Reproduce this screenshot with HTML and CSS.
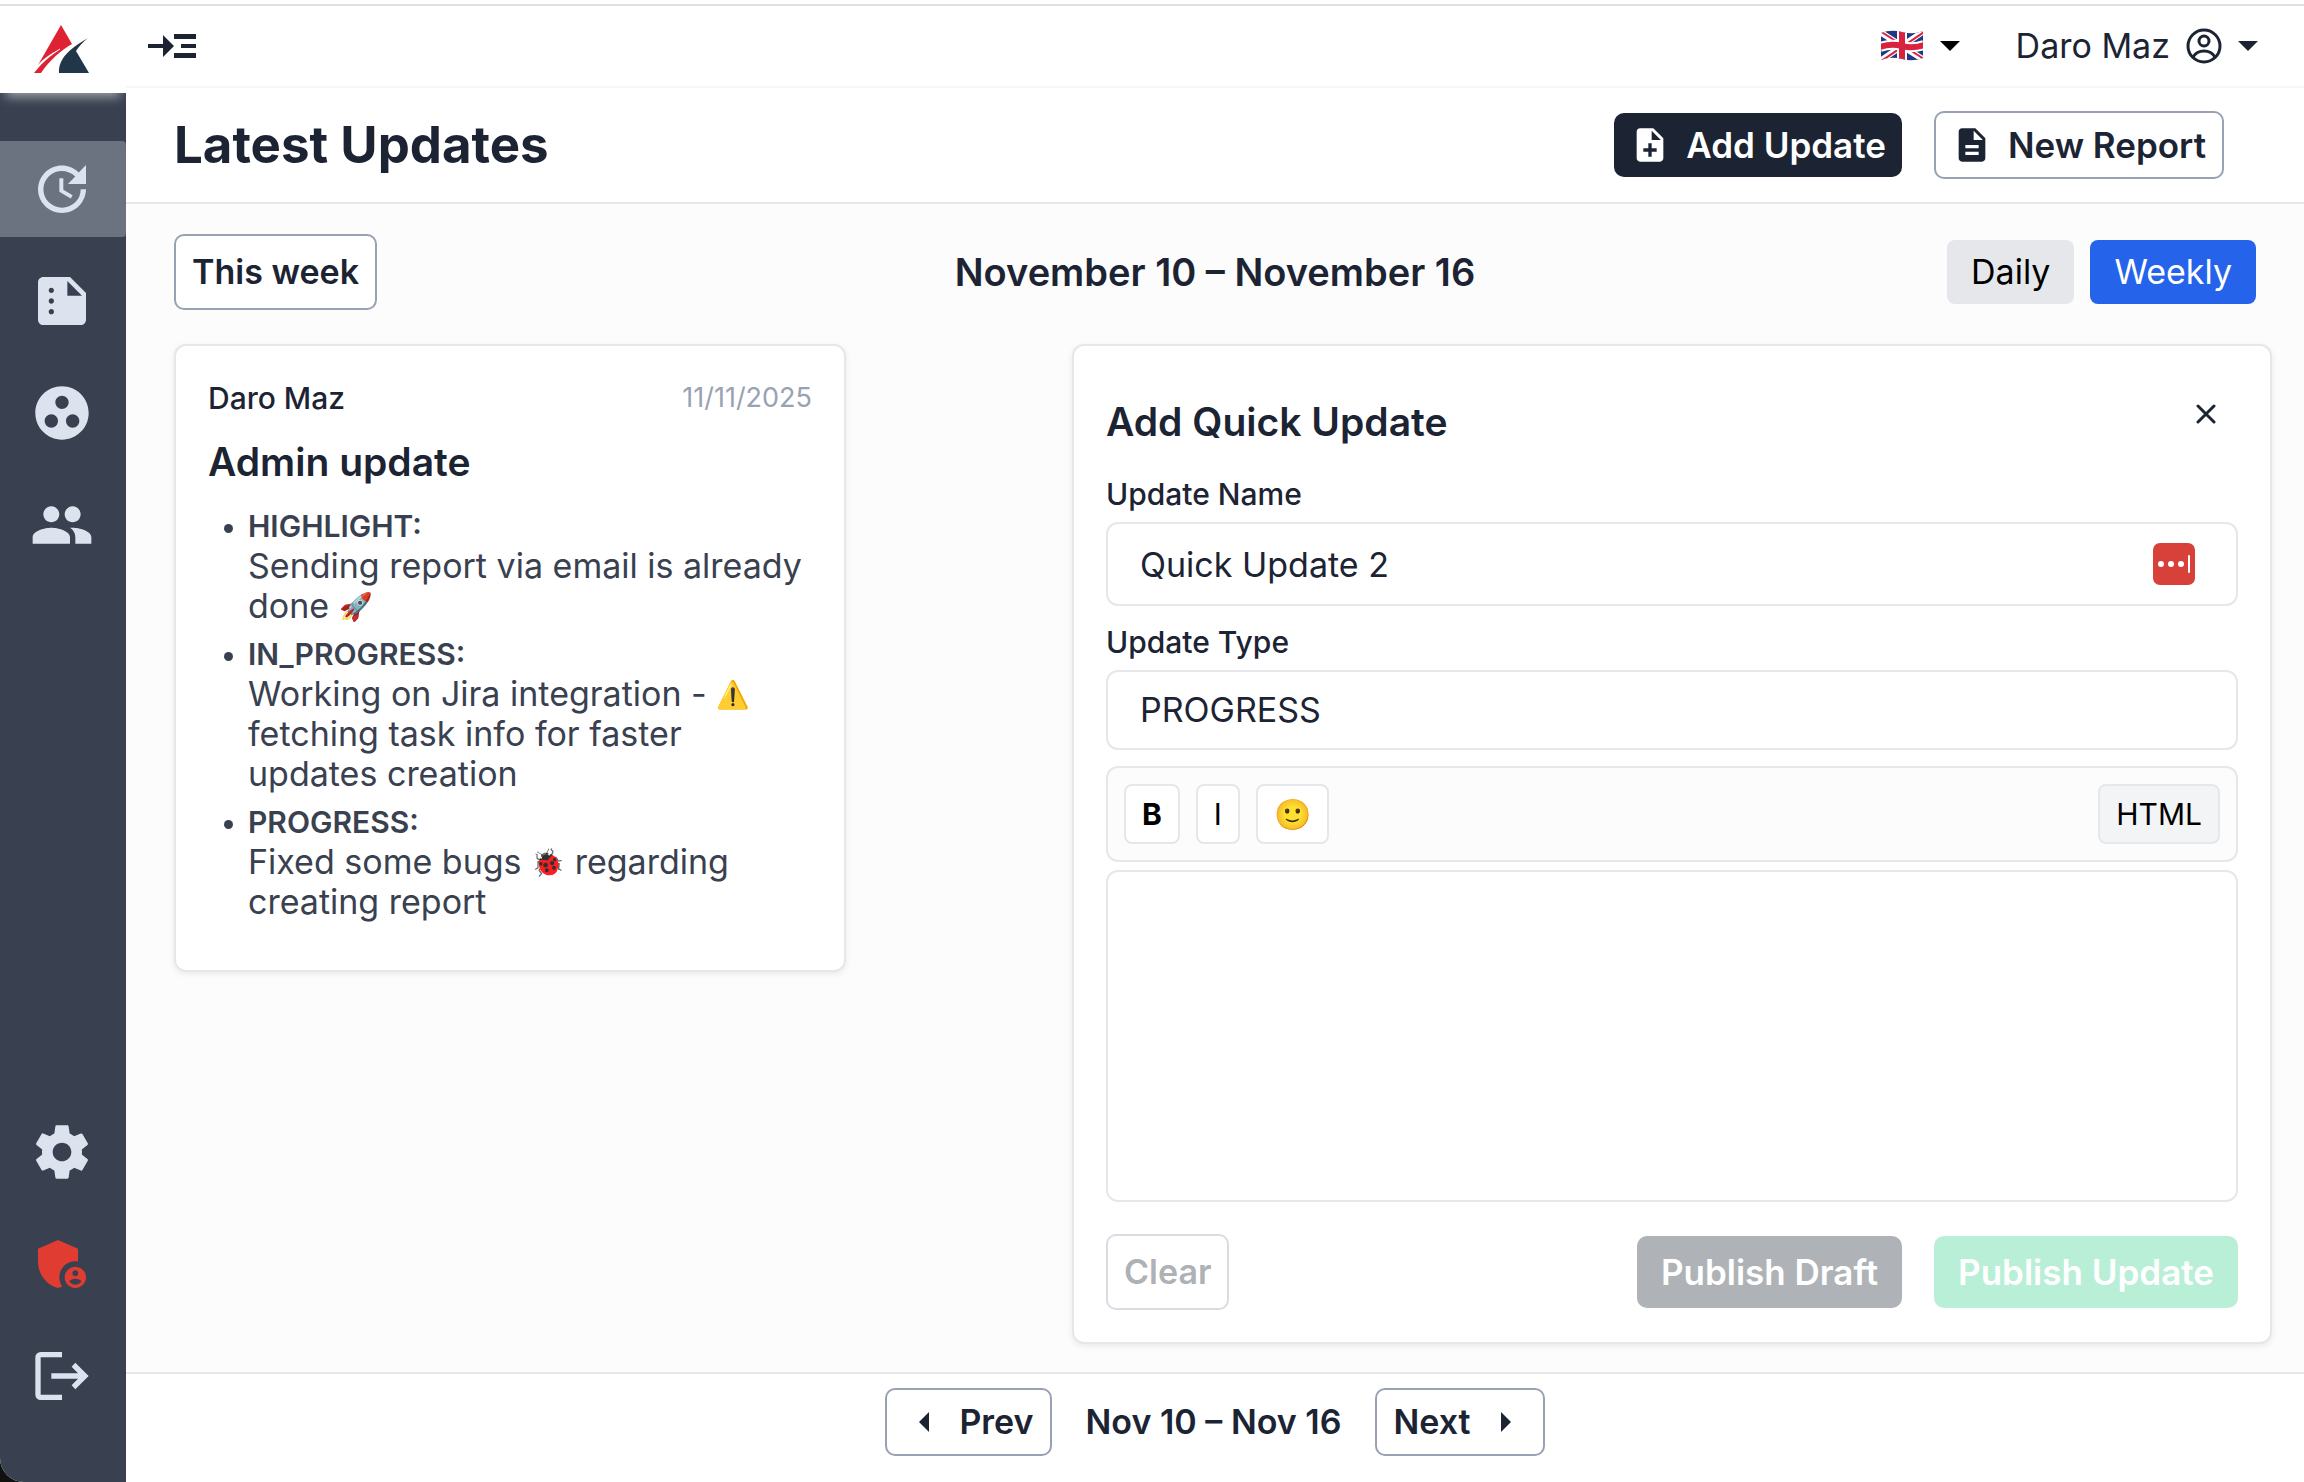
FILE: index.html
```
<!DOCTYPE html>
<html lang="en">
<head>
  <meta charset="UTF-8" />
  <meta name="viewport" content="width=device-width, initial-scale=1.0"/>
  <title>Latest Updates</title>
  <link rel="stylesheet" href="styles.css">
</head>
<body>
  <div class="app">
    <aside class="sidebar">
      <a class="logo" href="#" aria-label="Home">
        <svg width="56" height="48" viewBox="0 0 56 48">
          <path fill="#df2233" d="M27 0 38 19C27 25 15 36 7 48H0C7 39 17 30 25 25 17 28 9 34 4 40Z"/>
          <path fill="none" stroke="#fff" stroke-width="1" d="M4 41C11 34 18 29 26 24"/>
          <path fill="#22364a" d="M54 13C44 19 24 30 25 48H55L42 26C45 21 49 17 54 13Z"/>
        </svg>
      </a>
      <nav class="nav">
        <a class="nav-item active" href="#" aria-label="Updates">
          <svg viewBox="0 0 24 24"><path d="M21 10.12h-6.78l2.74-2.82c-2.73-2.7-7.15-2.8-9.88-.1-2.73 2.71-2.73 7.08 0 9.79s7.15 2.71 9.88 0C18.32 15.65 19 14.08 19 12.1h2c0 1.98-.88 4.55-2.64 6.29-3.51 3.48-9.21 3.48-12.72 0-3.5-3.47-3.53-9.11-.02-12.58s9.14-3.47 12.65 0L21 3v7.12zM12.5 8v4.25l3.5 2.08-.72 1.21L11 13V8h1.5z"/></svg>
        </a>
        <a class="nav-item" href="#" aria-label="Reports">
          <svg viewBox="0 0 24 24"><path d="M15 3H5c-1.1 0-1.99.9-1.99 2L3 19c0 1.1.89 2 1.99 2H19c1.1 0 2-.9 2-2V9l-6-6zM8 17c-.55 0-1-.45-1-1s.45-1 1-1 1 .45 1 1-.45 1-1 1zm0-4c-.55 0-1-.45-1-1s.45-1 1-1 1 .45 1 1-.45 1-1 1zm0-4c-.55 0-1-.45-1-1s.45-1 1-1 1 .45 1 1-.45 1-1 1zm6 1V4.5l5.5 5.5H14z"/></svg>
        </a>
        <a class="nav-item" href="#" aria-label="Teams">
          <svg viewBox="0 0 24 24"><path d="M12 2C6.48 2 2 6.48 2 12s4.48 10 10 10 10-4.48 10-10S17.52 2 12 2zM8 17.5c-1.38 0-2.5-1.12-2.5-2.5s1.12-2.5 2.5-2.5 2.5 1.12 2.5 2.5-1.12 2.5-2.5 2.5zM9.5 8c0-1.38 1.12-2.5 2.5-2.5s2.5 1.12 2.5 2.5-1.12 2.5-2.5 2.5S9.5 9.38 9.5 8zm6.5 9.5c-1.38 0-2.5-1.12-2.5-2.5s1.12-2.5 2.5-2.5 2.5 1.12 2.5 2.5-1.12 2.5-2.5 2.5z"/></svg>
        </a>
        <a class="nav-item" href="#" aria-label="Users">
          <svg viewBox="0 0 24 24"><path d="M16 11c1.66 0 2.99-1.34 2.99-3S17.66 5 16 5c-1.66 0-3 1.34-3 3s1.34 3 3 3zm-8 0c1.66 0 2.99-1.34 2.99-3S9.66 5 8 5C6.34 5 5 6.34 5 8s1.34 3 3 3zm0 2c-2.33 0-7 1.17-7 3.5V19h14v-2.5c0-2.33-4.67-3.5-7-3.5zm8 0c-.29 0-.62.02-.97.05 1.16.84 1.97 1.97 1.97 3.45V19h6v-2.5c0-2.33-4.67-3.5-7-3.5z"/></svg>
        </a>
      </nav>
      <nav class="nav nav-bottom">
        <a class="nav-item" href="#" aria-label="Settings">
          <svg viewBox="0 0 24 24"><path d="M19.43 12.98c.04-.32.07-.64.07-.98s-.03-.66-.07-.98l2.11-1.65c.19-.15.24-.42.12-.64l-2-3.46c-.12-.22-.39-.3-.61-.22l-2.49 1c-.52-.4-1.08-.73-1.69-.98l-.38-2.65C14.46 2.18 14.25 2 14 2h-4c-.25 0-.46.18-.49.42l-.38 2.65c-.61.25-1.17.59-1.69.98l-2.49-1c-.23-.09-.49 0-.61.22l-2 3.46c-.13.22-.07.49.12.64l2.11 1.65c-.04.32-.07.65-.07.98s.03.66.07.98l-2.11 1.65c-.19.15-.24.42-.12.64l2 3.46c.12.22.39.3.61.22l2.49-1c.52.4 1.08.73 1.69.98l.38 2.65c.03.24.24.42.49.42h4c.25 0 .46-.18.49-.42l.38-2.65c.61-.25 1.17-.59 1.69-.98l2.49 1c.23.09.49 0 .61-.22l2-3.46c.12-.22.07-.49-.12-.64l-2.11-1.65zM12 15.5c-1.93 0-3.5-1.57-3.5-3.5s1.57-3.5 3.5-3.5 3.5 1.57 3.5 3.5-1.57 3.5-3.5 3.5z"/></svg>
        </a>
        <a class="nav-item admin" href="#" aria-label="Admin panel">
          <svg viewBox="0 0 24 24"><path d="M17 11c.34 0 .67.04 1 .09V6.27L10.5 3 3 6.27v4.91c0 4.54 3.2 8.79 7.5 9.82.55-.13 1.08-.32 1.6-.55-.69-.98-1.1-2.17-1.1-3.45 0-3.31 2.69-6 6-6z"/><path d="M17 13c-2.21 0-4 1.79-4 4s1.79 4 4 4 4-1.79 4-4-1.79-4-4-4zm0 1.38c.62 0 1.12.51 1.12 1.12s-.51 1.12-1.12 1.12-1.12-.51-1.12-1.12.5-1.12 1.12-1.12zm0 5.37c-.93 0-1.74-.46-2.24-1.17.05-.72 1.51-1.08 2.24-1.08s2.19.36 2.24 1.08c-.5.71-1.31 1.17-2.24 1.17z"/></svg>
        </a>
        <a class="nav-item" href="#" aria-label="Log out">
          <svg viewBox="0 0 24 24"><path d="M12 5H4v14h8v2H4a2 2 0 0 1-2-2V5a2 2 0 0 1 2-2h8zM8 11h10l-2.4-2.5L17 7l5 5-5 5-1.4-1.5L18 13H8z"/></svg>
        </a>
      </nav>
    </aside>

    <div class="page">
      <header class="topbar">
        <button class="menu-toggle" aria-label="Open menu">
          <svg width="48" height="24" viewBox="0 0 48 24"><path d="M0 10h15V1l11 11-11 11v-9H0zM26 0h22v5H26zM33 10h15v4H33zM26 19h22v5H26z"/></svg>
        </button>
        <div class="topbar-right">
          <button class="lang" aria-label="Language">
            <svg width="44" height="32" viewBox="0 0 44 32" fill="none">
              <clipPath id="flag"><path d="M1 3Q11-1 22 2T43 1V28Q33 32 22 29T1 30Z"/></clipPath>
              <g clip-path="url(#flag)">
                <path fill="#1f3a85" d="M0 0h44v32H0z"/>
                <path stroke="#fff" stroke-width="6" d="M0 2 44 30M0 31 44 1"/>
                <path stroke="#d8233f" stroke-width="2" d="M0 1 44 29M0 32 44 2"/>
                <path stroke="#fff" stroke-width="10" d="M22 0v32M0 17Q11 13 22 16T44 15"/>
                <path stroke="#d8233f" stroke-width="6" d="M22 0v32M0 17Q11 13 22 16T44 15"/>
              </g>
            </svg>
            <svg width="20" height="10" viewBox="0 0 20 10"><path d="M0 0h20L10 10z"/></svg>
          </button>
          <button class="user">
            <span>Daro Maz</span>
            <svg width="36" height="36" viewBox="0 0 36 36" fill="none" stroke="#1c2434" stroke-width="3"><circle cx="18" cy="18" r="16"/><circle cx="18" cy="13" r="5"/><path d="M7 29c3-5 7-6 11-6s8 1 11 6"/></svg>
            <svg width="20" height="10" viewBox="0 0 20 10" fill="#1c2434"><path d="M0 0h20L10 10z"/></svg>
          </button>
        </div>
      </header>

      <div class="titlebar">
        <h1>Latest Updates</h1>
        <div class="titlebar-actions">
          <button class="btn btn-wide btn-dark">
            <svg width="40" height="40" viewBox="0 0 24 24" fill="#fff"><path d="M14 2H6c-1.1 0-1.99.9-1.99 2L4 20c0 1.1.89 2 1.99 2H18c1.1 0 2-.9 2-2V8l-6-6zm2 14h-3v3h-2v-3H8v-2h3v-3h2v3h3v2zm-3-7V3.5L18.5 9H13z"/></svg>
            Add Update
          </button>
          <button class="btn btn-wide btn-outline">
            <svg width="40" height="40" viewBox="0 0 24 24" fill="#1c2434"><path d="M14 2H6c-1.1 0-1.99.9-1.99 2L4 20c0 1.1.89 2 1.99 2H18c1.1 0 2-.9 2-2V8l-6-6zm2 16H8v-2h8v2zm0-4H8v-2h8v2zm-3-5V3.5L18.5 9H13z"/></svg>
            New Report
          </button>
        </div>
      </div>

      <main class="content">
        <div class="filters">
          <button class="btn btn-outline this-week">This week</button>
          <h2 class="range">November 10 – November 16</h2>
          <div class="view-switch">
            <button class="view">Daily</button>
            <button class="view selected">Weekly</button>
          </div>
        </div>

        <div class="columns">
          <article class="card">
            <div class="card-head">
              <span class="author">Daro Maz</span>
              <time class="date" datetime="2025-11-11">11/11/2025</time>
            </div>
            <h3 class="card-title">Admin update</h3>
            <ul class="updates">
              <li><strong>HIGHLIGHT:</strong>Sending report via email is already<br>done <span class="emoji">🚀</span></li>
              <li><strong>IN_PROGRESS:</strong>Working on Jira integration - <span class="emoji">⚠️</span><br>fetching task info for faster<br>updates creation</li>
              <li><strong>PROGRESS:</strong>Fixed some bugs <span class="emoji">🐞</span> regarding<br>creating report</li>
            </ul>
          </article>

          <form class="card form">
            <div class="form-head">
              <h3>Add Quick Update</h3>
              <button type="button" class="close" aria-label="Close">
                <svg width="20" height="20" viewBox="0 0 20 20" stroke="#1c2434" stroke-width="3" stroke-linecap="round"><path d="M2 2l16 16M18 2 2 18"/></svg>
              </button>
            </div>

            <label for="name">Update Name</label>
            <div class="name-field">
              <input type="text" id="name" value="Quick Update 2">
              <svg class="fill-icon" width="42" height="42" viewBox="0 0 42 42">
                <rect width="42" height="42" rx="7" fill="#d8403a"/>
                <g fill="#fff"><circle cx="8" cy="21" r="3"/><circle cx="18" cy="21" r="3"/><circle cx="28" cy="21" r="3"/><rect x="35" y="12" width="2" height="18" rx="1"/></g>
              </svg>
            </div>

            <label for="type">Update Type</label>
            <select id="type">
              <option>PROGRESS</option>
              <option>HIGHLIGHT</option>
              <option>IN_PROGRESS</option>
            </select>

            <div class="editor-tools">
              <button type="button" class="tool bold">B</button>
              <button type="button" class="tool">I</button>
              <button type="button" class="tool">🙂</button>
              <button type="button" class="tool html">HTML</button>
            </div>
            <textarea aria-label="Update text"></textarea>

            <div class="form-actions">
              <button type="button" class="btn btn-outline clear" disabled>Clear</button>
              <button type="button" class="btn btn-wide publish draft" disabled>Publish Draft</button>
              <button type="button" class="btn btn-wide publish" disabled>Publish Update</button>
            </div>
          </form>
        </div>
      </main>

      <footer class="pager">
        <button class="btn btn-outline">
          <svg width="40" height="20" viewBox="0 0 40 20" fill="#1c2434"><path d="M26 0v20L16 10z"/></svg>
          Prev
        </button>
        <span class="pager-range">Nov 10 – Nov 16</span>
        <button class="btn btn-outline">
          Next
          <svg width="40" height="20" viewBox="0 0 40 20" fill="#1c2434"><path d="M14 0v20l10-10z"/></svg>
        </button>
      </footer>
    </div>
  </div>
</body>
</html>
```
FILE: styles.css
```
* {
  box-sizing: border-box;
}

body {
  margin: 0;
  background: #111;
  color: #1c2434;
  font-family: Inter, "Noto Sans", sans-serif;
  font-size: 34px;
  line-height: 40px;
}

h1, h2, h3, ul {
  margin: 0;
}

button, input, select, textarea {
  font: inherit;
  color: inherit;
}

button {
  border: none;
  background: none;
  cursor: pointer;
}

svg {
  display: block;
  flex-shrink: 0;
}

.app {
  display: flex;
  min-height: 100vh;
  background: linear-gradient(#fff 4px, #e0e0e0 4px, #e0e0e0 6px, #fff 6px);
  padding-top: 6px;
  border-bottom-left-radius: 24px;
  overflow: hidden;
}

/* sidebar */
.sidebar {
  width: 126px;
  flex-shrink: 0;
  display: flex;
  flex-direction: column;
  background: #394150;
}

.logo {
  height: 87px;
  padding: 19px 34px;
  background: #fff;
  box-shadow: 0 10px 10px -6px rgba(255, 255, 255, 0.5);
}

.nav {
  display: flex;
  flex-direction: column;
  gap: 16px;
  padding-top: 48px;
}

.nav-bottom {
  margin-top: auto;
  padding-bottom: 58px;
}

.nav-item {
  padding: 16px 30px;
  border-radius: 0 4px 4px 0;
}

.nav-item svg {
  width: 64px;
  height: 64px;
  fill: #dde3ee;
}

.nav-item.active {
  background: #6b7280;
}

.nav-item.admin svg {
  fill: #e03c31;
}

/* header */
.page {
  flex: 1;
  display: flex;
  flex-direction: column;
  min-width: 0;
}

.topbar {
  height: 82px;
  padding: 0 46px 0 22px;
  display: flex;
  align-items: center;
  justify-content: space-between;
  border-bottom: 2px solid #f7f7f8;
}

.menu-toggle {
  padding: 0;
}

.menu-toggle svg {
  fill: #1c2434;
}

.topbar-right,
.lang,
.user {
  display: flex;
  align-items: center;
}

.topbar-right {
  gap: 56px;
}

.lang,
.user {
  padding: 0;
  gap: 16px;
}

.titlebar {
  height: 116px;
  padding: 0 80px 0 48px;
  display: flex;
  align-items: center;
  justify-content: space-between;
  background: #fff;
  border-bottom: 2px solid #e5e7eb;
  box-shadow: 0 2px 4px rgba(0, 0, 0, 0.05);
}

.titlebar h1 {
  font-size: 51px;
  font-weight: 700;
}

.titlebar-actions {
  display: flex;
  align-items: center;
  gap: 32px;
}

.btn {
  display: flex;
  align-items: center;
  gap: 16px;
  padding: 12px 16px;
  border-radius: 10px;
  font-weight: 600;
  white-space: nowrap;
}

.btn-wide {
  font-size: 35px;
}

.btn-dark {
  background: #1c2434;
  color: #fff;
}

.btn-outline {
  background: #fff;
  border: 2px solid #98a2b3;
}

/* content */
.content {
  flex: 1;
  background: #fcfcfd;
  padding: 30px 32px 28px 48px;
}

.filters {
  display: grid;
  grid-template-columns: 1fr auto 1fr;
  align-items: center;
  margin-right: 16px;
}

.this-week {
  justify-self: start;
  padding: 16px;
}

.range {
  font-size: 38px;
  font-weight: 600;
}

.view-switch {
  display: flex;
  justify-content: flex-end;
  gap: 16px;
}

.view {
  padding: 12px 24px;
  border-radius: 8px;
  background: #e5e7eb;
  color: #000;
}

.view.selected {
  background: #2563eb;
  color: #fff;
}

.columns {
  display: grid;
  grid-template-columns: 28fr 50fr;
  column-gap: 226px;
  align-items: start;
  margin-top: 34px;
}

.card {
  padding: 32px;
  background: #fff;
  border: 2px solid #e5e7eb;
  border-radius: 12px;
  box-shadow: 0 2px 6px rgba(0, 0, 0, 0.08);
}

.card-head {
  display: flex;
  justify-content: space-between;
}

.author {
  font-size: 30px;
  font-weight: 500;
}

.date {
  color: #98a2b3;
  font-size: 27px;
}

.card-title {
  margin: 24px 0;
  font-size: 39px;
  font-weight: 600;
}

.updates {
  padding-left: 40px;
  margin-bottom: 16px;
  color: #394150;
}

.updates li + li {
  margin-top: 8px;
}

.updates li::marker {
  font-size: 27px;
}

.updates strong {
  display: block;
  font-size: 30px;
  font-weight: 600;
}

.emoji {
  font-size: 27px;
  line-height: 1;
  vertical-align: 2px;
}

/* quick update form */
.form {
  display: flex;
  flex-direction: column;
}

.form-head {
  height: 88px;
  margin-bottom: 8px;
  display: flex;
  align-items: center;
  justify-content: space-between;
}

.form-head h3 {
  font-size: 39px;
  font-weight: 600;
}

.close {
  align-self: flex-start;
  padding: 26px 22px;
}

.form label {
  margin-bottom: 8px;
  font-size: 30px;
  font-weight: 500;
}

.form input,
.form select,
.form textarea {
  width: 100%;
  padding: 0 32px;
  margin: 0;
  background: #fff;
  border: 2px solid #e5e7eb;
  border-radius: 12px;
  outline: none;
}

.name-field {
  position: relative;
  margin-bottom: 16px;
}

.form input {
  display: block;
  height: 84px;
}

.fill-icon {
  position: absolute;
  top: 21px;
  right: 43px;
}

.form select {
  appearance: none;
  height: 80px;
  margin-bottom: 16px;
}

.editor-tools {
  display: flex;
  gap: 16px;
  padding: 16px;
  background: #fcfcfd;
  border: 2px solid #e5e7eb;
  border-radius: 12px;
}

.tool {
  height: 60px;
  padding: 0 16px;
  background: #fff;
  border: 2px solid #e5e7eb;
  border-radius: 8px;
  color: #000;
  font-size: 30px;
}

.tool.bold {
  font-weight: 700;
}

.tool.html {
  margin-left: auto;
  background: #f3f4f6;
}

.form textarea {
  height: 332px;
  margin: 8px 0 32px;
  padding: 16px 32px;
  resize: none;
}

.form-actions {
  display: flex;
  align-items: center;
  gap: 32px;
}

.clear {
  margin-right: auto;
  padding: 16px;
  border-color: #dadce1;
  color: #aeb1b5;
}

.publish {
  padding: 16px 24px;
  background: #b9efd7;
  color: #fff;
}

.publish.draft {
  background: #afb2b7;
}

/* pager */
.pager {
  display: flex;
  justify-content: center;
  gap: 34px;
  padding: 14px 0 26px;
  background: #fff;
  border-top: 2px solid #e5e7eb;
}

.pager-range {
  align-self: center;
  font-weight: 600;
}
```
